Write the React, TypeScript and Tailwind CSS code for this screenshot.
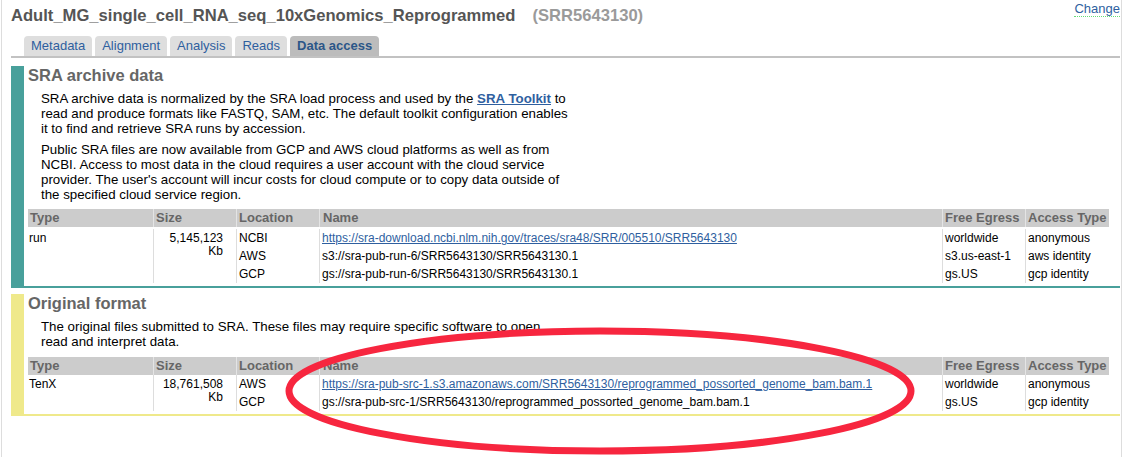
const font = { fontFamily: '"Liberation Sans", Arial, Helvetica, sans-serif' };

type Row = { loc: string; name: string; link?: boolean; egress: string; access: string };

const cols = "grid grid-cols-[125px_83px_83px_623px_83px_84px]";

function FileTable({ type, size, rows, bodyPad }: { type: string; size: string; rows: Row[]; bodyPad: string }) {
    const n = rows.length;
    return (
        <div className="ml-[4px] w-[1081px] text-[12px] text-black">
            {/* header */}
            <div className={`${cols} h-[18px] bg-[#cccccc] text-[13px] font-bold text-[#666666] leading-[18px]`}>
                <div className="pl-[2px]">Type</div>
                <div className="pl-[2px] border-l border-[#e4e4e4]">Size</div>
                <div className="pl-[2px] border-l border-[#e4e4e4]">Location</div>
                <div className="pl-[3px] border-l border-[#e4e4e4]">Name</div>
                <div className="pl-[2px] border-l border-[#e4e4e4]">Free Egress</div>
                <div className="pl-[2px] border-l border-[#e4e4e4]">Access Type</div>
            </div>
            {/* body */}
            <div className={`${cols} ${bodyPad} leading-[18px]`} style={{ gridTemplateRows: `repeat(${n}, 18px)` }}>
                <div className="pl-[1px]" style={{ gridRow: `1 / span ${n}` }}>
                    {type}
                </div>
                <div
                    className="border-l border-[#dddddd] pr-[13px] pt-[3px] text-right leading-[13px]"
                    style={{ gridRow: `1 / span ${n}` }}
                >
                    {size}
                    <br />
                    Kb
                </div>
                {rows.map((r, i) => (
                    <div key={i} className="contents">
                        <div className="border-l border-[#dddddd] pl-[2px]" style={{ gridRow: i + 1, gridColumn: 3 }}>
                            {r.loc}
                        </div>
                        <div className="border-l border-[#dddddd] pl-[2px]" style={{ gridRow: i + 1, gridColumn: 4 }}>
                            {r.link ? <a className="text-[#2f5f9f] underline">{r.name}</a> : r.name}
                        </div>
                        <div className="border-l border-[#dddddd] pl-[2px]" style={{ gridRow: i + 1, gridColumn: 5 }}>
                            {r.egress}
                        </div>
                        <div className="border-l border-[#dddddd] pl-[2px]" style={{ gridRow: i + 1, gridColumn: 6 }}>
                            {r.access}
                        </div>
                    </div>
                ))}
            </div>
        </div>
    );
}

const tabs = ["Metadata", "Alignment", "Analysis", "Reads", "Data access"];

export default function App() {
    return (
        <div className="relative h-[457px] w-[1123px] overflow-hidden bg-white" style={font}>
            <div className="ml-[1px] h-full w-[1121px] border-x border-[#dddddd] pl-[9px] pr-[1px]">
                {/* title row */}
                <div className="flex items-start justify-between">
                    <div className="pt-[5px] text-[16.6px] font-bold leading-[22px] text-[#555555]">
                        Adult_MG_single_cell_RNA_seq_10xGenomics_Reprogrammed
                        <span className="ml-[17px] text-[#9a9a9a]">(SRR5643130)</span>
                    </div>
                    <a className="mt-[1px] border-b border-dotted border-[#66dd77] text-[13px] leading-[15px] text-[#2f5f9f]">
                        Change
                    </a>
                </div>

                {/* tabs */}
                <div className="mt-[9px] flex gap-[3px] border-b-2 border-[#c2c2c2] pl-[13px]">
                    {tabs.map((t) => (
                        <div
                            key={t}
                            className={`h-[20px] rounded-t-[4px] px-[7px] text-[13px] leading-[20px] ${
                                t === "Data access"
                                    ? "bg-[#bcbcbc] font-bold text-[#2b5688]"
                                    : "bg-[#dedede] text-[#2f5f9f]"
                            }`}
                        >
                            {t}
                        </div>
                    ))}
                </div>

                {/* SRA archive data */}
                <div className="mt-[8px] border-b-2 border-l-[13px] border-[#48a09b] pb-[3px]">
                    <div className="pl-[4px] text-[16.5px] font-bold leading-[18px] text-[#666666]">SRA archive data</div>
                    <div className="ml-[17px] mt-[7px] whitespace-nowrap text-[13.3px] leading-[15px] text-black">
                        <p>
                            SRA archive data is normalized by the SRA load process and used by the{" "}
                            <a className="font-bold text-[#2f5f9f] underline">SRA Toolkit</a> to
                            <br />
                            read and produce formats like FASTQ, SAM, etc. The default toolkit configuration enables
                            <br />
                            it to find and retrieve SRA runs by accession.
                        </p>
                        <p className="mt-[6px]">
                            Public SRA files are now available from GCP and AWS cloud platforms as well as from
                            <br />
                            NCBI. Access to most data in the cloud requires a user account with the cloud service
                            <br />
                            provider. The user's account will incur costs for cloud compute or to copy data outside of
                            <br />
                            the specified cloud service region.
                        </p>
                    </div>
                    <div className="mt-[7px]">
                        <FileTable
                            type="run"
                            size="5,145,123"
                            bodyPad="pt-[2px]"
                            rows={[
                                {
                                    loc: "NCBI",
                                    name: "https://sra-download.ncbi.nlm.nih.gov/traces/sra48/SRR/005510/SRR5643130",
                                    link: true,
                                    egress: "worldwide",
                                    access: "anonymous",
                                },
                                {
                                    loc: "AWS",
                                    name: "s3://sra-pub-run-6/SRR5643130/SRR5643130.1",
                                    egress: "s3.us-east-1",
                                    access: "aws identity",
                                },
                                {
                                    loc: "GCP",
                                    name: "gs://sra-pub-run-6/SRR5643130/SRR5643130.1",
                                    egress: "gs.US",
                                    access: "gcp identity",
                                },
                            ]}
                        />
                    </div>
                </div>

                {/* Original format */}
                <div className="mt-[6px] border-b-2 border-l-[13px] border-[#efe98b] pb-[3px]">
                    <div className="pl-[4px] text-[16.5px] font-bold leading-[18px] text-[#666666]">Original format</div>
                    <div className="ml-[17px] mt-[7px] whitespace-nowrap text-[13.3px] leading-[15px] text-black">
                        <p>
                            The original files submitted to SRA. These files may require specific software to open
                            <br />
                            read and interpret data.
                        </p>
                    </div>
                    <div className="mt-[8px]">
                        <FileTable
                            type="TenX"
                            size="18,761,508"
                            bodyPad="pt-0"
                            rows={[
                                {
                                    loc: "AWS",
                                    name: "https://sra-pub-src-1.s3.amazonaws.com/SRR5643130/reprogrammed_possorted_genome_bam.bam.1",
                                    link: true,
                                    egress: "worldwide",
                                    access: "anonymous",
                                },
                                {
                                    loc: "GCP",
                                    name: "gs://sra-pub-src-1/SRR5643130/reprogrammed_possorted_genome_bam.bam.1",
                                    egress: "gs.US",
                                    access: "gcp identity",
                                },
                            ]}
                        />
                    </div>
                </div>
            </div>

            {/* red annotation ellipse */}
            <svg className="pointer-events-none absolute left-0 top-0" width="1123" height="457">
                <ellipse cx="600" cy="391" rx="311" ry="60" fill="none" stroke="#f7263f" strokeWidth="7" />
            </svg>
        </div>
    );
}
